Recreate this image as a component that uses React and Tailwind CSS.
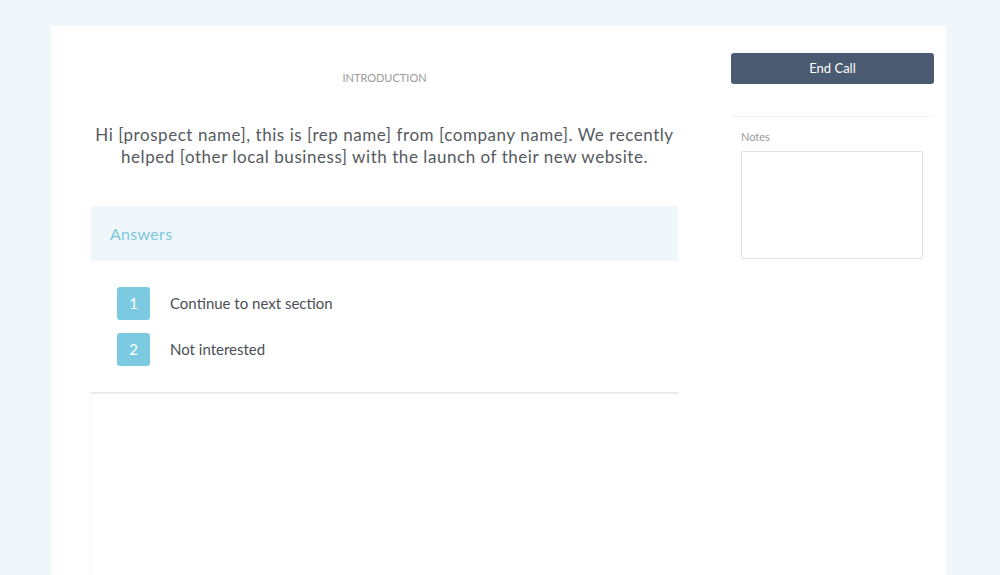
export default function App() {
  return (
    <div className="w-[1000px] h-[575px] overflow-hidden bg-[#eff7fa] pt-[26px] pl-[51px] pr-[54px]" style={{ fontFamily: "Lato, 'Open Sans', sans-serif" }}>
      <div className="flex h-[549px] bg-white">
        <div className="w-[680px] pl-[40px] pr-[13px] flex flex-col">
          <div className="w-[587px] flex-1 flex flex-col">
            <div className="pt-[46px] text-center text-[11px] text-[#9a9a9a] uppercase leading-[12px]">Introduction</div>
            <p className="mt-[40px] text-center text-[17px] tracking-[0.55px] leading-[22px] text-[#555a60]">
              Hi [prospect name], this is [rep name] from [company name]. We recently helped [other local business] with the launch of their new website.
            </p>
            <div className="mt-[38px] border-b-2 border-[#e9ebec]">
              <div className="h-[55px] bg-[#eff7fa] flex items-center pl-[19px]">
                <span className="text-[16px] tracking-[0.3px] text-[#7cc6dc]">Answers</span>
              </div>
              <div className="pt-[26px] pb-[26px] pl-[26px] flex flex-col gap-[13px]">
                <div className="flex items-center">
                  <div className="w-[33px] h-[33px] rounded-[3px] bg-[#7ccae2] text-white text-[15px] flex items-center justify-center">1</div>
                  <span className="ml-[20px] text-[15px] text-[#4a4f55]">Continue to next section</span>
                </div>
                <div className="flex items-center">
                  <div className="w-[33px] h-[33px] rounded-[3px] bg-[#7ccae2] text-white text-[15px] flex items-center justify-center">2</div>
                  <span className="ml-[20px] text-[15px] text-[#4a4f55]">Not interested</span>
                </div>
              </div>
            </div>
            <div className="flex-1 border-l border-[#f4f6f7]"></div>
          </div>
        </div>
        <div className="w-[203px] pt-[27px] flex flex-col">
          <button className="h-[31px] w-full rounded-[3px] bg-[#4a5a70] text-white text-[13px]">End Call</button>
          <div className="mt-[32px] border-t border-[#eef3f5]"></div>
          <div className="px-[10px] pt-[13px]">
            <div className="text-[11px] text-[#9a9a9a] leading-[14px]">Notes</div>
            <div className="mt-[7px] w-[182px] h-[108px] border border-[#dfe2e4] rounded-[2px]"></div>
          </div>
        </div>
      </div>
    </div>
  );
}
